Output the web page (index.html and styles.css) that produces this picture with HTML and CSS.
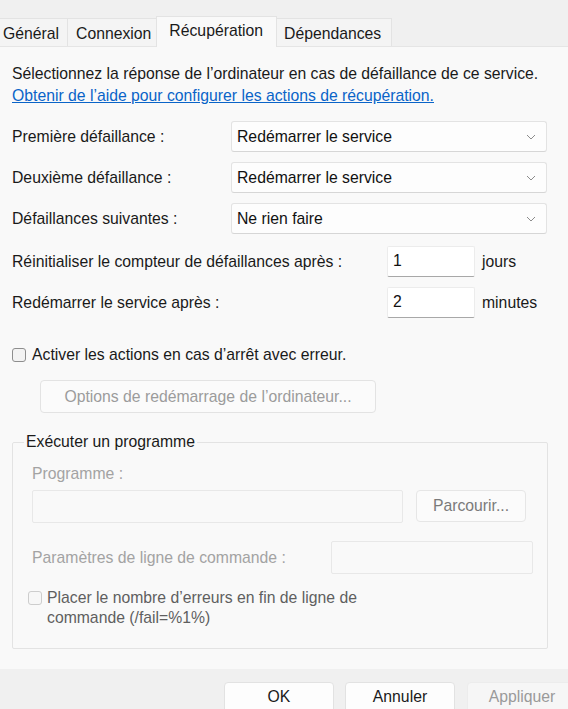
FILE: index.html
```html
<!DOCTYPE html>
<html lang="fr">
<head>
<meta charset="utf-8">
<title>Récupération</title>
<link rel="stylesheet" href="styles.css">
</head>
<body>
<div class="window">
  <div class="tabs">
    <div class="tab tab-first">Général</div>
    <div class="tab tab-second">Connexion</div>
    <div class="tab tab-active">Récupération</div>
    <div class="tab tab-last">Dépendances</div>
  </div>

  <div class="panel">
    <div class="intro">
      <div>Sélectionnez la réponse de l’ordinateur en cas de défaillance de ce service.</div>
      <a class="link" href="#">Obtenir de l’aide pour configurer les actions de récupération.</a>
    </div>

    <div class="select-rows">
      <div class="select-row">
        <span class="select-label">Première défaillance :</span>
        <div class="combo"><span>Redémarrer le service</span><svg class="chev" width="10" height="6" viewBox="0 0 10 6"><path d="M1 1 L5 5 L9 1" fill="none" stroke="#8c8c8c" stroke-width="1"/></svg></div>
      </div>
      <div class="select-row">
        <span class="select-label">Deuxième défaillance :</span>
        <div class="combo"><span>Redémarrer le service</span><svg class="chev" width="10" height="6" viewBox="0 0 10 6"><path d="M1 1 L5 5 L9 1" fill="none" stroke="#8c8c8c" stroke-width="1"/></svg></div>
      </div>
      <div class="select-row">
        <span class="select-label">Défaillances suivantes :</span>
        <div class="combo"><span>Ne rien faire</span><svg class="chev" width="10" height="6" viewBox="0 0 10 6"><path d="M1 1 L5 5 L9 1" fill="none" stroke="#8c8c8c" stroke-width="1"/></svg></div>
      </div>
    </div>

    <div class="num-rows">
      <div class="num-row">
        <span class="num-label">Réinitialiser le compteur de défaillances après :</span>
        <div class="num-input">1</div>
        <span class="unit">jours</span>
      </div>
      <div class="num-row">
        <span class="num-label">Redémarrer le service après :</span>
        <div class="num-input">2</div>
        <span class="unit">minutes</span>
      </div>
    </div>

    <div class="check-row">
      <span class="checkbox"></span>
      <span>Activer les actions en cas d’arrêt avec erreur.</span>
    </div>

    <div class="btn btn-disabled btn-options">Options de redémarrage de l’ordinateur...</div>

    <fieldset class="group">
      <legend class="group-title">Exécuter un programme</legend>
      <div class="muted prog-label">Programme :</div>
      <div class="prog-row">
        <div class="field field-prog"></div>
        <div class="btn btn-browse">Parcourir...</div>
      </div>
      <div class="param-row">
        <span class="muted param-label">Paramètres de ligne de commande :</span>
        <div class="field field-param"></div>
      </div>
      <div class="fail-row">
        <span class="checkbox checkbox-disabled"></span>
        <span class="fail-text">Placer le nombre d’erreurs en fin de ligne de<br>commande (/fail=%1%)</span>
      </div>
    </fieldset>
  </div>

  <div class="footer">
    <div class="btn btn-footer">OK</div>
    <div class="btn btn-footer">Annuler</div>
    <div class="btn btn-footer btn-apply">Appliquer</div>
  </div>
</div>
</body>
</html>
```

FILE: styles.css
```css
* { box-sizing: border-box; }

html, body {
  margin: 0;
  padding: 0;
}

body {
  background: #f0f0f0;
  font-family: "Liberation Sans", Arial, sans-serif;
  font-size: 15.75px;
  color: #1a1a1a;
  overflow: hidden;
}

.window {
  width: 568px;
  height: 709px;
  overflow: hidden;
}

/* Tabs */
.tabs {
  display: flex;
  align-items: flex-end;
  height: 46px;
  margin-left: -7px;
  position: relative;
  z-index: 1;
}

.tab {
  height: 28px;
  padding: 5px 6px 3px;
  line-height: 20px;
  background: #f4f4f4;
  border: 1px solid #e3e3e3;
  border-bottom: none;
  margin-right: -1px;
  white-space: nowrap;
}

.tab-first {
  padding-left: 9px;
  padding-right: 8px;
}

.tab-second {
  padding-left: 8px;
  padding-right: 6px;
}

.tab-active {
  height: 31px;
  padding: 4px 13px 7px 12px;
  background: #f9f9f9;
  margin-left: -1px;
  margin-right: -1px;
  margin-bottom: -1px;
  z-index: 2;
  position: relative;
}

.tab-last {
  padding-left: 7px;
  padding-right: 10px;
}

/* Panel */
.panel {
  height: 623px;
  background: #f9f9f9;
  border-top: 1px solid #e5e5e5;
  padding: 16px 12px 0 12px;
}

.intro {
  line-height: 22px;
}

.link {
  color: #0a64c8;
  text-decoration: underline;
}

.select-rows {
  margin-top: 14px;
  display: flex;
  flex-direction: column;
  gap: 10px;
}

.select-row {
  display: flex;
  align-items: center;
  height: 31px;
}

.select-label {
  width: 219px;
}

.combo {
  width: 316px;
  height: 31px;
  background: #fdfdfd;
  border: 1px solid #e3e3e3;
  border-bottom-color: #d6d6d6;
  border-radius: 3px;
  display: flex;
  align-items: center;
  justify-content: space-between;
  padding: 0 10px 0 5px;
  color: #111;
}

.chev {
  display: block;
}

.num-rows {
  margin-top: 12px;
  display: flex;
  flex-direction: column;
  gap: 10px;
}

.num-row {
  display: flex;
  align-items: center;
  height: 31px;
}

.num-label {
  width: 375px;
}

.num-input {
  width: 88px;
  height: 31px;
  background: #ffffff;
  border: 1px solid #ececec;
  border-bottom: 1px solid #a8a8a8;
  border-radius: 2px;
  padding: 4px 5px 0;
  line-height: 20px;
  color: #111;
}

.unit {
  margin-left: 7px;
}

/* Checkbox */
.check-row {
  margin-top: 27px;
  display: flex;
  align-items: center;
  height: 20px;
  gap: 6px;
}

.checkbox {
  width: 14px;
  height: 14px;
  border: 1px solid #8e8e8e;
  border-radius: 3px;
  background: #f3f3f3;
  flex-shrink: 0;
}

/* Buttons */
.btn {
  background: #fdfdfd;
  border: 1px solid #e3e3e3;
  border-radius: 4px;
  display: flex;
  align-items: center;
  justify-content: center;
  color: #1a1a1a;
  white-space: nowrap;
}

.btn-disabled {
  background: #fbfbfb;
  color: #9c9c9c;
}

.btn-options {
  margin: 15px 0 0 28px;
  width: 336px;
  height: 33px;
}

/* Group */
.group {
  margin: 19px 0 0 0;
  width: 536px;
  border: 1px solid #e3e3e3;
  border-radius: 2px;
  padding: 0 14px 20px 19px;
  min-width: 0;
}

.group-title {
  margin-left: -8px;
  padding: 0 2px;
  line-height: 20px;
  color: #1a1a1a;
}

.muted {
  color: #a3a3a3;
}

.prog-label {
  margin-top: 12px;
  line-height: 20px;
}

.prog-row {
  margin-top: 6px;
  display: flex;
  align-items: flex-start;
  gap: 13px;
}

.field {
  background: #f9f9f9;
  border: 1px solid #e8e8e8;
  border-radius: 2px;
  height: 33px;
  flex-shrink: 0;
}

.field-prog {
  width: 371px;
}

.btn-browse {
  width: 110px;
  height: 32px;
  background: #fbfbfb;
  border-color: #e6e6e6;
  color: #7a7a7a;
}

.param-row {
  margin-top: 18px;
  display: flex;
  align-items: center;
}

.param-label {
  width: 299px;
  flex-shrink: 0;
}

.field-param {
  width: 202px;
}

.fail-row {
  margin-top: 14px;
  display: flex;
  align-items: flex-start;
  margin-left: -4px;
  gap: 5px;
}

.checkbox-disabled {
  border-color: #cdcdcd;
  background: #f7f7f7;
  margin-top: 3px;
}

.fail-text {
  line-height: 20px;
  color: #5f5f5f;
}

/* Footer */
.footer {
  display: flex;
  gap: 11px;
  padding: 13px 0 0 224px;
}

.btn-footer {
  width: 110px;
  height: 31px;
  flex-shrink: 0;
  background: #fdfdfd;
  border-color: #e2e2e2;
  padding-bottom: 2px;
}

.btn-apply {
  margin-left: 1px;
  background: #f6f6f6;
  border-color: #ececec;
  color: #9a9a9a;
}
```
